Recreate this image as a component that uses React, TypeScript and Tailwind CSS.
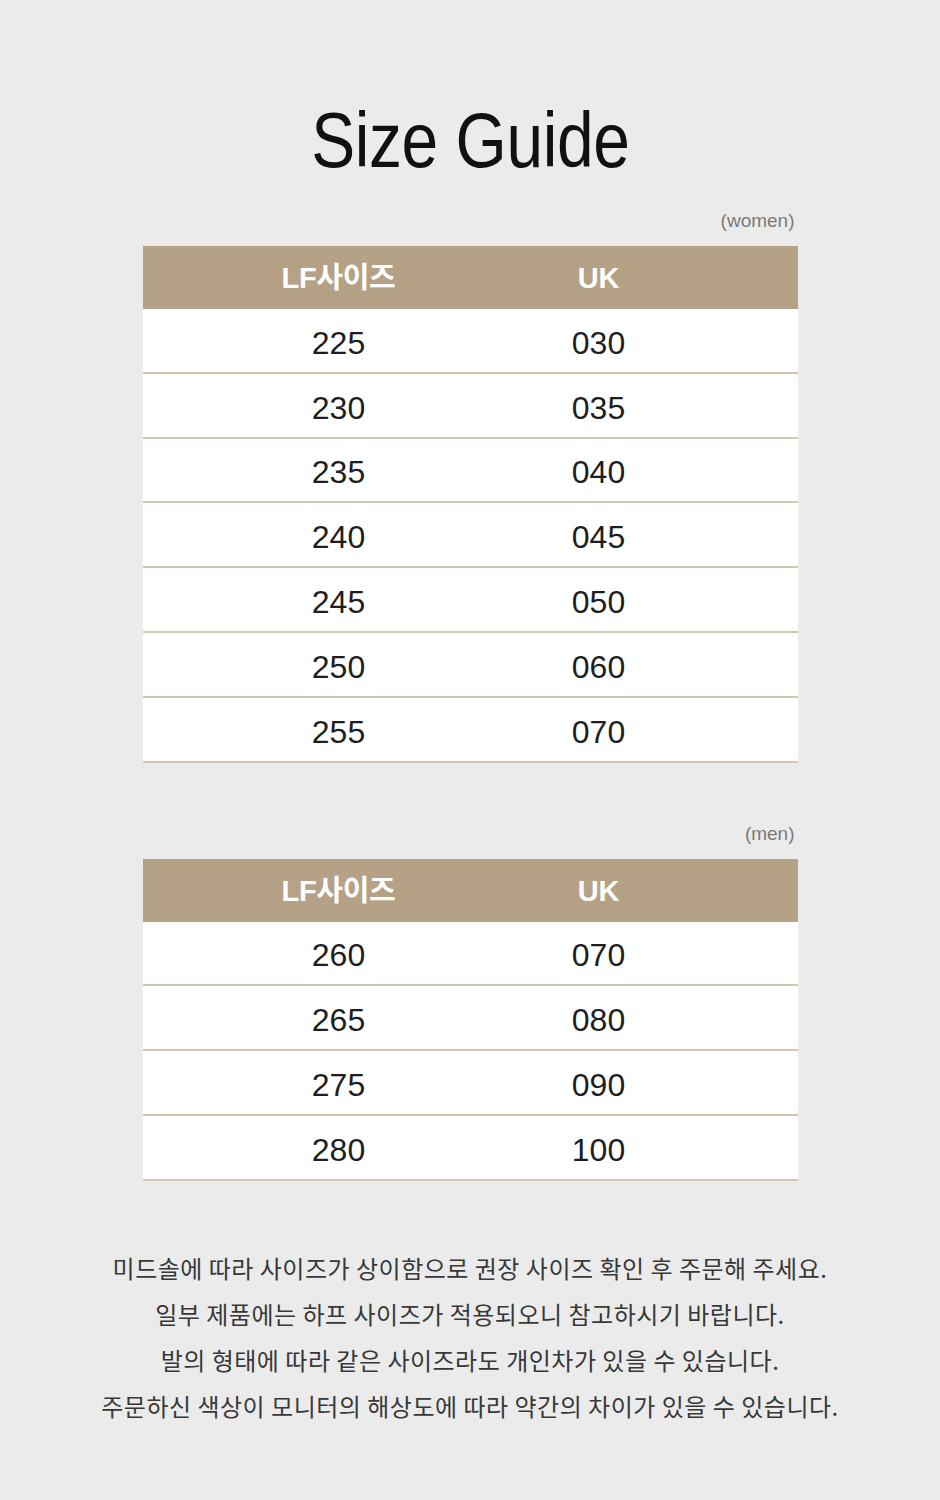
const women = [
  ["225", "030"],
  ["230", "035"],
  ["235", "040"],
  ["240", "045"],
  ["245", "050"],
  ["250", "060"],
  ["255", "070"],
];

const men = [
  ["260", "070"],
  ["265", "080"],
  ["275", "090"],
  ["280", "100"],
];

const notes = [
  "미드솔에 따라 사이즈가 상이함으로 권장 사이즈 확인 후 주문해 주세요.",
  "일부 제품에는 하프 사이즈가 적용되오니 참고하시기 바랍니다.",
  "발의 형태에 따라 같은 사이즈라도 개인차가 있을 수 있습니다.",
  "주문하신 색상이 모니터의 해상도에 따라 약간의 차이가 있을 수 있습니다.",
];

function SizeTable({ label, rows }: { label: string; rows: string[][] }) {
  return (
    <div className="w-[655px] mx-auto">
      <div className="text-right pr-[3px] text-[19px] leading-[20px] text-[#7a7a7a] font-['Liberation_Sans',sans-serif]">
        ({label})
      </div>
      <div className="mt-[15px] flex items-center pl-[66px] h-[63px] bg-[#b5a185] text-white text-[29px] font-bold tracking-[-0.3px] font-['Liberation_Sans','Noto_Sans_CJK_KR',sans-serif]">
        <div className="w-[260px] text-center pt-[3px]">LF사이즈</div>
        <div className="w-[260px] text-center pt-[3px]">UK</div>
      </div>
      {rows.map(([lf, uk]) => (
        <div
          key={lf}
          className="flex items-center pl-[66px] h-[64.8px] bg-white border-b-2 border-[#d6c6ad] text-[32px] text-[#1e1e1e] font-['Liberation_Sans',sans-serif]"
        >
          <div className="w-[260px] text-center pt-[5px]">{lf}</div>
          <div className="w-[260px] text-center pt-[5px]">{uk}</div>
        </div>
      ))}
    </div>
  );
}

export default function App() {
  return (
    <div className="w-[940px] min-h-[1500px] bg-[#ebebeb] pt-[101px]">
      <div className="text-center">
        <h1 className="inline-block scale-x-[0.845] text-[78px] leading-[78px] text-[#111] font-['Liberation_Sans',sans-serif] tracking-[-0.5px]">
          Size Guide
        </h1>
      </div>
      <div className="mt-[32px]">
        <SizeTable label="women" rows={women} />
      </div>
      <div className="mt-[61px]">
        <SizeTable label="men" rows={men} />
      </div>
      <div className="mt-[64px] text-center text-[24px] leading-[46px] tracking-[0.5px] text-[#383838] font-['Noto_Sans_CJK_KR',sans-serif]">
        {notes.map((n) => (
          <p key={n}>{n}</p>
        ))}
      </div>
    </div>
  );
}
